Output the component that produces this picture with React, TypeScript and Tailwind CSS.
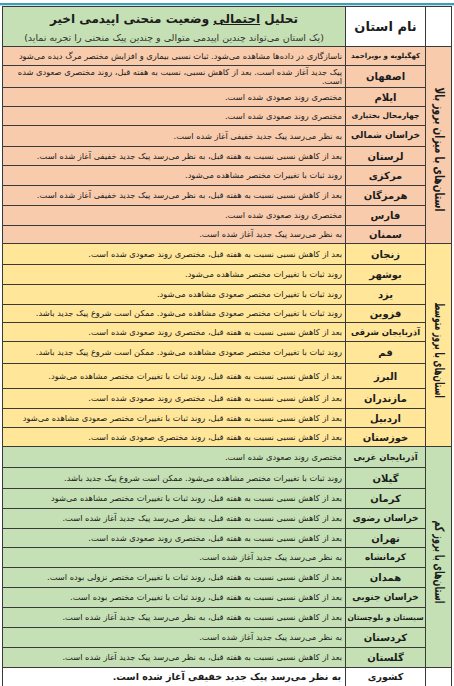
import React from "react";

type Row = { n: string; d: string; h: string; ns?: string; wrap?: boolean };
type Group = { label: string; bg: string; sc: string; rows: Row[] };

const groups: Group[] = [
  {
    label: "استان‌های با میزان بروز بالا",
    bg: "bg-[#f8cbad]",
    sc: "scale-y-[0.7]",
    rows: [
      { n: "کهگیلویه و بویراحمد", d: "ناسازگاری در داده‌ها مشاهده می‌شود. ثبات نسبی بیماری و افزایش مختصر مرگ دیده می‌شود", h: "h-[19px]", ns: "text-[7px]" },
      { n: "اصفهان", d: "پیک جدید آغاز شده است. بعد از کاهش نسبی، نسبت به هفته قبل، روند مختصری صعودی شده است.", h: "h-[22px]", wrap: true },
      { n: "ایلام", d: "مختصری روند صعودی شده است.", h: "h-[19px]" },
      { n: "چهارمحال بختیاری", d: "مختصری روند صعودی شده است.", h: "h-[19px]", ns: "text-[7.5px]" },
      { n: "خراسان شمالی", d: "به نظر می‌رسد پیک جدید خفیفی آغاز شده است.", h: "h-[21px]", ns: "text-[9px]" },
      { n: "لرستان", d: "بعد از کاهش نسبی نسبت به هفته قبل، به نظر می‌رسد پیک جدید خفیفی آغاز شده است.", h: "h-[19px]" },
      { n: "مرکزی", d: "روند ثبات با تغییرات مختصر مشاهده می‌شود.", h: "h-[20px]" },
      { n: "هرمزگان", d: "بعد از کاهش نسبی نسبت به هفته قبل، به نظر می‌رسد پیک جدید خفیفی آغاز شده است.", h: "h-[20px]" },
      { n: "فارس", d: "مختصری روند صعودی شده است.", h: "h-[20px]" },
      { n: "سمنان", d: "به نظر می‌رسد پیک جدید آغاز شده است.", h: "h-[18px]" },
    ],
  },
  {
    label: "استان‌های با بروز متوسط",
    bg: "bg-[#ffe699]",
    sc: "scale-y-[0.58]",
    rows: [
      { n: "زنجان", d: "بعد از کاهش نسبی نسبت به هفته قبل، مختصری روند صعودی شده است.", h: "h-[21px]" },
      { n: "بوشهر", d: "روند ثبات با تغییرات مختصر مشاهده می‌شود.", h: "h-[20px]" },
      { n: "یزد", d: "روند ثبات با تغییرات مختصر صعودی مشاهده می‌شود.", h: "h-[20px]" },
      { n: "قزوین", d: "روند ثبات با تغییرات مختصر صعودی مشاهده می‌شود. ممکن است شروع پیک جدید باشد.", h: "h-[18px]" },
      { n: "آذربایجان شرقی", d: "بعد از کاهش نسبی نسبت به هفته قبل، مختصری روند صعودی شده است.", h: "h-[19px]", ns: "text-[8.5px]" },
      { n: "قم", d: "روند ثبات با تغییرات مختصر صعودی مشاهده می‌شود. ممکن است شروع پیک جدید باشد.", h: "h-[22px]" },
      { n: "البرز", d: "بعد از کاهش نسبی نسبت به هفته قبل، روند ثبات با تغییرات مختصر مشاهده می‌شود.", h: "h-[25px]" },
      { n: "مازندران", d: "بعد از کاهش نسبی نسبت به هفته قبل، مختصری روند صعودی شده است.", h: "h-[20px]" },
      { n: "اردبیل", d: "بعد از کاهش نسبی نسبت به هفته قبل، روند ثبات با تغییرات مختصر صعودی مشاهده می‌شود", h: "h-[19px]" },
      { n: "خوزستان", d: "بعد از کاهش نسبی نسبت به هفته قبل، روند مختصری صعودی شده است.", h: "h-[19px]" },
    ],
  },
  {
    label: "استان‌های با بروز کم",
    bg: "bg-[#c5e0b4]",
    sc: "scale-y-[0.62]",
    rows: [
      { n: "آذربایجان غربی", d: "مختصری روند صعودی شده است.", h: "h-[21px]", ns: "text-[8.5px]" },
      { n: "گیلان", d: "روند ثبات با تغییرات مختصر مشاهده می‌شود. ممکن است شروع پیک جدید باشد.", h: "h-[21px]" },
      { n: "کرمان", d: "بعد از کاهش نسبی نسبت به هفته قبل، روند ثبات با تغییرات مختصر مشاهده می‌شود", h: "h-[20px]" },
      { n: "خراسان رضوی", d: "بعد از کاهش نسبی نسبت به هفته قبل، به نظر می‌رسد پیک جدید آغاز شده است.", h: "h-[20px]", ns: "text-[9px]" },
      { n: "تهران", d: "بعد از کاهش نسبی نسبت به هفته قبل، مختصری روند صعودی شده است.", h: "h-[19px]" },
      { n: "کرمانشاه", d: "به نظر می‌رسد پیک جدید آغاز شده است.", h: "h-[20px]", ns: "text-[9px]" },
      { n: "همدان", d: "بعد از کاهش نسبی نسبت به هفته قبل، روند ثبات با تغییرات مختصر نزولی بوده است.", h: "h-[20px]" },
      { n: "خراسان جنوبی", d: "بعد از کاهش نسبی نسبت به هفته قبل، روند ثبات با تغییرات مختصر بوده است.", h: "h-[20px]", ns: "text-[9px]" },
      { n: "سیستان و بلوچستان", d: "بعد از کاهش نسبی نسبت به هفته قبل، به نظر می‌رسد پیک جدید آغاز شده است.", h: "h-[20px]", ns: "text-[7.5px]" },
      { n: "کردستان", d: "به نظر می‌رسد پیک جدید آغاز شده است.", h: "h-[20px]" },
      { n: "گلستان", d: "بعد از کاهش نسبی نسبت به هفته قبل، به نظر می‌رسد پیک جدید آغاز شده است.", h: "h-[20px]" },
    ],
  },
];

const cell = "border border-[#3a3a3a] p-0";

export default function App() {
  return (
    <div
      className="w-[454px] h-[686px] bg-white overflow-hidden text-[#1c1c1c]"
      style={{ fontFamily: '"DejaVu Sans", sans-serif' }}
    >
      <div className="pt-[3px]">
        <div className="h-[2px] bg-[#3f9fb2]" />
        <div className="h-px bg-[#c4e4ec]" />
      </div>
      <table dir="rtl" className="ml-[2px] w-[450px] table-fixed border-collapse">
        <colgroup>
          <col className="w-[26px]" />
          <col className="w-[80px]" />
          <col />
        </colgroup>
        <tbody>
          <tr className="h-[40px]">
            <td className={`${cell} bg-white`} />
            <td className={`${cell} bg-white text-center align-middle text-[13px] font-bold`}>نام استان</td>
            <td className={`${cell} bg-[#c5e0b4] text-center align-top`}>
              <div className="pt-[3px] text-[12px] font-bold leading-[18px]">
                تحلیل <span className="underline">احتمالی</span> وضعیت منحنی اپیدمی اخیر
              </div>
              <div className="mt-[3px] text-[9.5px] leading-[14px] text-[#333]">
                (یک استان می‌تواند چندین اپیدمی متوالی و چندین پیک منحنی را تجربه نماید)
              </div>
            </td>
          </tr>
          {groups.map((g) =>
            g.rows.map((r, i) => (
              <tr key={g.label + r.n} className={`${r.h} ${g.bg}`}>
                {i === 0 && (
                  <td rowSpan={g.rows.length} className={`${cell} align-middle`}>
                    <div className="flex justify-center pt-[10px]">
                      <div
                        className={`[writing-mode:vertical-rl] whitespace-nowrap text-[13px] font-bold leading-[16px] ${g.sc}`}
                      >
                        {g.label}
                      </div>
                    </div>
                  </td>
                )}
                <td className={`${cell} text-center align-middle font-bold whitespace-nowrap ${r.ns ?? "text-[10px]"}`}>
                  {r.n}
                </td>
                <td
                  className={`${cell} px-[3px] text-right align-middle text-[8.3px] leading-[8.5px] overflow-hidden ${
                    r.wrap ? "whitespace-normal" : "whitespace-nowrap"
                  }`}
                >
                  {r.d}
                </td>
              </tr>
            ))
          )}
          <tr className="h-[19px] bg-white">
            <td className={cell} />
            <td className={`${cell} text-center align-middle text-[9.5px] font-bold`}>کشوری</td>
            <td className={`${cell} px-[4px] text-right align-middle text-[9.5px] font-bold`}>
              به نظر می‌رسد پیک جدید خفیفی آغاز شده است.
            </td>
          </tr>
        </tbody>
      </table>
    </div>
  );
}
